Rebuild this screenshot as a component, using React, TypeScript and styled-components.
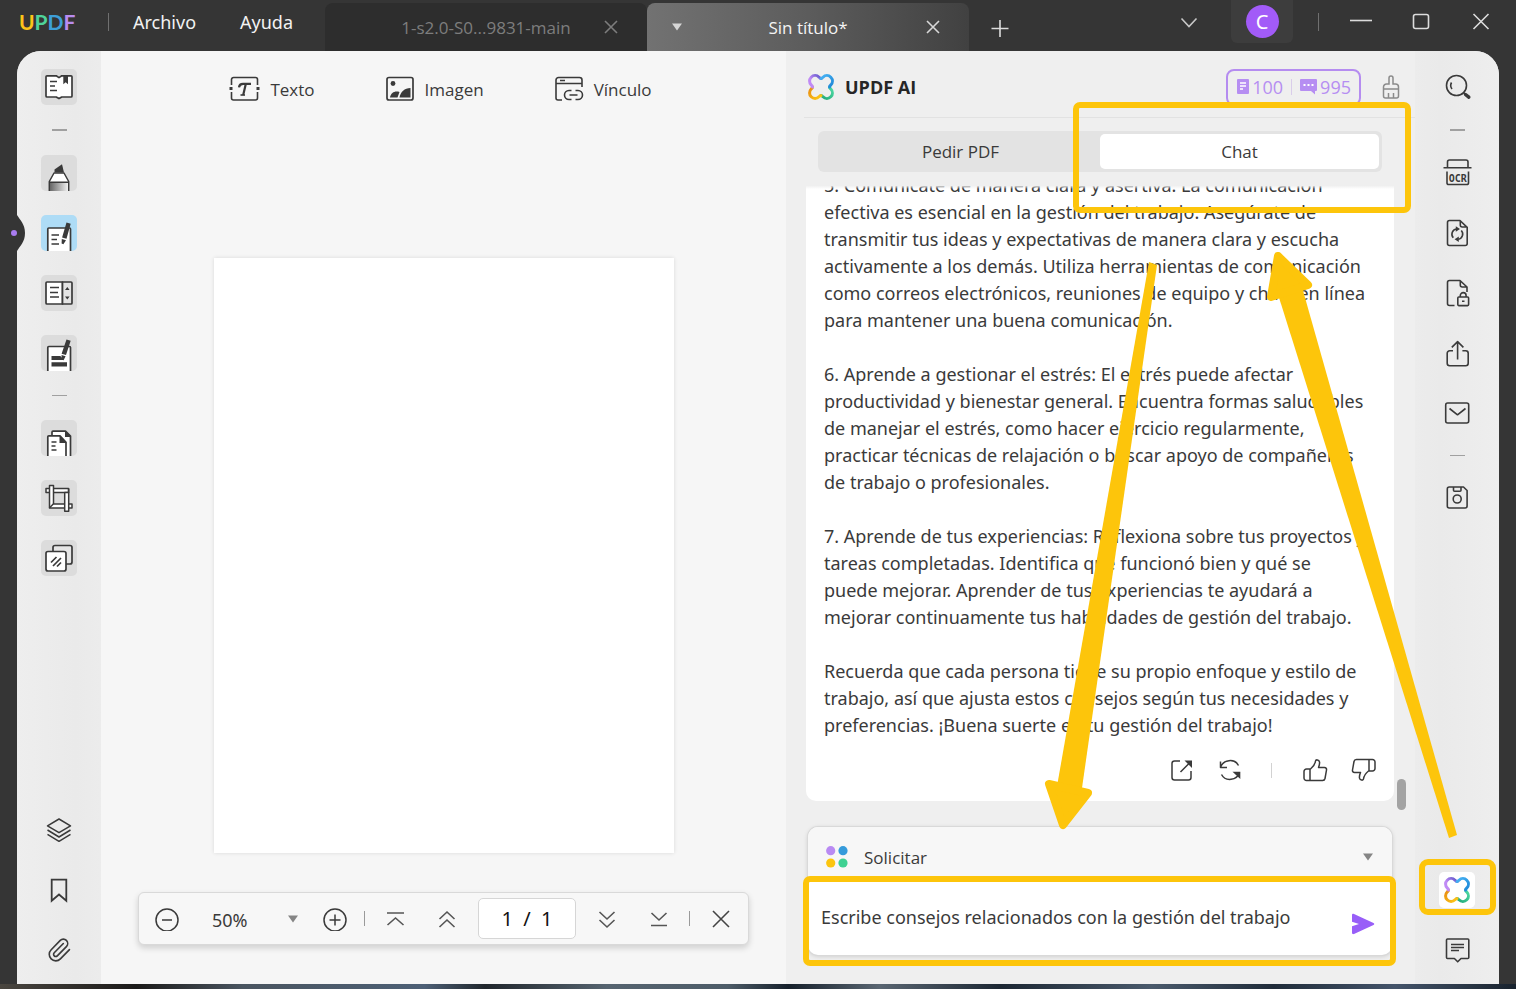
import React from "react";
import styled, { createGlobalStyle } from "styled-components";
import { Paperclip } from "lucide-react";

const INK = "#3a3a3a";
const FONT = '"Noto Sans", "Open Sans", sans-serif';
const FONT_UI = '"Open Sans", "Noto Sans", sans-serif';

const GlobalStyle = createGlobalStyle`
  * { box-sizing: border-box; }
  body { margin: 0; background: #353535; font-family: ${FONT}; font-size: 18px; color: ${INK}; }
  button, input, select, textarea { font: inherit; color: inherit; margin: 0; }
`;

/* ---------- frame ---------- */
const Page = styled.div`
  position: relative;
  display: flex;
  flex-direction: column;
  height: 100vh;
  min-height: 900px;
  overflow: hidden;
`;
const TitleBar = styled.header`
  display: flex;
  align-items: flex-end;
  height: 51px;
  flex: none;
  padding-right: 5px;
  background: #353535;
  color: #f2f2f2;
`;
const Body = styled.main`
  position: relative;
  display: flex;
  flex: 1;
  min-height: 0;
  margin: 0 17px;
  background: #f6f6f6;
  border-radius: 24px 24px 0 0;
`;
const DesktopEdge = styled.div`
  flex: none;
  height: 5px;
  background: linear-gradient(90deg, #4a4640 0%, #1b1a19 9%, #4a5560 16%, #4d6076 28%, #20262c 32%, #566470 40%, #4d5c68 48%, #16202b 52%, #5a6672 58%, #1c2733 66%, #4a5a6c 76%, #202c3a 84%, #44546a 92%, #18222d 100%);
`;

/* ---------- title bar ---------- */
const BarGroup = styled.div`
  display: flex;
  align-items: center;
  height: 100%;
  padding-bottom: 7px;
`;
const Logo = styled.span`
  width: 58px;
  margin-left: 19px;
  font: 700 21px/24px Lato, sans-serif;
`;
const Letter = styled.span<{ $c: string }>`
  color: ${(p) => p.$c};
`;
const BarRule = styled.span<{ $l: number; $r: number }>`
  width: 1px;
  height: 18px;
  margin: 0 ${(p) => p.$r}px 0 ${(p) => p.$l}px;
  background: #707070;
`;
const MenuButton = styled.button`
  padding: 0;
  margin-right: 44px;
  border: 0;
  background: none;
`;
const TabStrip = styled.div`
  display: flex;
  flex: 0 1 644px;
  margin-left: -12px;
`;
const Tab = styled.div<{ $active?: boolean }>`
  display: grid;
  grid-template-columns: 24px 1fr 24px;
  align-items: center;
  flex: 1 1 322px;
  height: 48px;
  padding: 0 24px;
  border-radius: 8px 8px 0 0;
  font-family: ${FONT_UI};
  font-size: 17px;
  color: ${(p) => (p.$active ? "#f4f4f4" : "#7d7d7d")};
  background: ${(p) => (p.$active ? "linear-gradient(90deg, #727272, #5c5c5c 50%, #414141)" : "#2d2d2d")};
`;
const TabTitle = styled.span`
  grid-column: 2;
  text-align: center;
  white-space: nowrap;
`;
const GlyphButton = styled.button<{ $w: number; $tall?: boolean }>`
  display: flex;
  align-items: center;
  justify-content: center;
  flex: none;
  width: ${(p) => p.$w}px;
  height: ${(p) => (p.$tall ? 42 : 36)}px;
  padding: 0;
  border: 0;
  background: none;
`;
const Spacer = styled.div`
  flex: 1;
`;
const Account = styled.button`
  display: flex;
  align-items: center;
  justify-content: center;
  align-self: flex-start;
  width: 62px;
  height: 43px;
  margin-left: 12px;
  padding: 0;
  border: 0;
  border-radius: 0 0 6px 6px;
  background: #3d3d3d;
`;
const Avatar = styled.span`
  width: 33px;
  height: 33px;
  border-radius: 50%;
  background: #a25bf8;
  color: #fff;
  font-size: 20px;
  line-height: 33px;
`;

/* ---------- side rails ---------- */
const Rail = styled.nav<{ $side: "left" | "right" }>`
  position: relative;
  display: flex;
  flex-direction: column;
  align-items: center;
  gap: 24px;
  flex: none;
  width: 84px;
  padding: 18px 0 16px;
  border-radius: ${(p) => (p.$side === "left" ? "24px 0 0 0" : "0 24px 0 0")};
  background: linear-gradient(${(p) => (p.$side === "left" ? "90deg" : "270deg")}, #eeeeee, #eaeaea 70%, #ececec);
`;
const RailButton = styled.button<{ $bg?: string }>`
  width: 36px;
  height: 36px;
  flex: none;
  padding: 0;
  border: 0;
  border-radius: 5px;
  background: ${(p) => p.$bg || "transparent"};
  overflow: hidden;
  svg { display: block; }
`;
const RailRule = styled.span<{ $thin?: boolean }>`
  width: 15px;
  height: ${(p) => (p.$thin ? 1 : 2)}px;
  flex: none;
  background: #a0a0a0;
`;
const RailGrip = styled.span`
  position: absolute;
  left: -8px;
  top: 162px;
  width: 16px;
  height: 40px;
`;

/* ---------- canvas ---------- */
const Canvas = styled.section`
  display: flex;
  flex-direction: column;
  align-items: center;
  flex: 1;
  min-width: 0;
  padding-bottom: 39px;
`;
const EditBar = styled.div`
  display: flex;
  align-items: center;
  justify-content: center;
  gap: 70px;
  height: 76px;
  padding-right: 6px;
`;
const EditButton = styled.button`
  display: flex;
  align-items: center;
  gap: 10px;
  padding: 0;
  border: 0;
  background: none;
  font-family: ${FONT_UI};
  font-size: 17px;
`;
const Sheet = styled.div`
  width: 460px;
  height: 595px;
  margin-bottom: 39px;
  flex: none;
  background: #fff;
  box-shadow: 0 0 4px rgba(0, 0, 0, 0.12);
`;
const ZoomBar = styled.div`
  display: flex;
  align-items: center;
  height: 53px;
  flex: none;
  padding-left: 13px;
  border: 1px solid #d9d9d9;
  border-radius: 6px;
  background: #f7f7f7;
  box-shadow: 0 3px 6px rgba(0, 0, 0, 0.16);
`;
const SelectWrap = styled.label<{ $zoom?: boolean }>`
  position: relative;
  display: flex;
  align-items: center;
  ${(p) => (p.$zoom ? "width: 88px; margin: 0 20px 0 30px;" : `flex: 1; margin-left: 16px; font-family: ${FONT_UI}; font-size: 17px;`)}
  svg { position: absolute; right: 1px; pointer-events: none; }
`;
const Select = styled.select`
  appearance: none;
  width: 100%;
  padding: 2px 0 0;
  border: 0;
  background: none;
  outline: 0;
`;
const ZoomRule = styled.span<{ $l: number }>`
  width: 1px;
  height: 15px;
  margin: 0 4px 0 ${(p) => p.$l}px;
  background: #9a9a9a;
`;
const PageInput = styled.input`
  width: 98px;
  height: 41px;
  margin: 0 5px;
  padding: 0;
  border: 1px solid #d6d6d6;
  border-radius: 5px;
  background: #fff;
  color: #111;
  font-size: 20px;
  text-align: center;
`;

/* ---------- assistant ---------- */
const Panel = styled.section`
  display: flex;
  flex-direction: column;
  flex: none;
  width: 629px;
  padding-bottom: 29px;
  background: #efefef;
`;
const PanelHead = styled.div`
  display: flex;
  align-items: center;
  height: 67px;
  margin-left: 18px;
  padding: 6px 12px 0 4px;
  border-bottom: 1px solid #e2e2e2;
  flex: none;
`;
const PanelTitle = styled.h1`
  flex: 1;
  margin: 0 0 0 11px;
  font-family: ${FONT_UI};
  font-size: 18px;
  line-height: 24px;
  font-weight: 700;
  color: #262626;
`;
const Credits = styled.div`
  display: flex;
  align-items: center;
  gap: 3px;
  height: 37px;
  margin-right: 18px;
  padding: 0 8px 0 9px;
  border: 2px solid #b58cf0;
  border-radius: 8px;
  font-family: ${FONT_UI};
  color: #b68ef2;
`;
const CreditRule = styled.span`
  width: 1px;
  height: 16px;
  margin: 0 5px;
  background: #d9cdea;
`;
const Segments = styled.div`
  display: grid;
  grid-template-columns: 1fr 1fr;
  flex: none;
  height: 41px;
  margin: 13px 33px 10px 32px;
  padding: 3px;
  border-radius: 6px;
  background: #e3e3e3;
`;
const Segment = styled.button<{ $on?: boolean }>`
  padding: 0;
  border: 0;
  border-radius: 5px;
  font-family: ${FONT_UI};
  font-size: 17px;
  background: ${(p) => (p.$on ? "#fff" : "transparent")};
`;
const Feed = styled.div`
  position: relative;
  display: flex;
  flex: 1;
  min-height: 0;
  margin: 0 8px 14px 20px;
  overflow: hidden;
  &::before {
    content: "";
    position: absolute;
    inset: 0 0 auto 0;
    height: 7px;
    background: linear-gradient(#efefef 50%, rgba(239, 239, 239, 0));
  }
`;
const Messages = styled.div`
  display: flex;
  flex-direction: column;
  justify-content: flex-end;
  flex: 1;
  padding-bottom: 12px;
`;
const Card = styled.article`
  padding: 18px 0 14px 18px;
  border-radius: 10px;
  background: #fff;
`;
const Answer = styled.p`
  margin: 0 0 27px;
  line-height: 27px;
  white-space: pre;
  &:last-of-type { margin-bottom: 14px; }
`;
const Actions = styled.div`
  display: flex;
  align-items: center;
  justify-content: flex-end;
  padding-right: 6px;
  height: 34px;
`;
const ActionRule = styled.span`
  width: 1px;
  height: 15px;
  margin: 0 18px 0 17px;
  background: #d2d2d2;
`;
const ScrollThumb = styled.span`
  align-self: flex-end;
  width: 9px;
  height: 31px;
  margin: 0 1px 3px 3px;
  border-radius: 5px;
  background: #a3a3a3;
`;
const Composer = styled.form`
  display: flex;
  flex-direction: column;
  flex: none;
  height: 128px;
  margin: 0 23px 0 22px;
  border-radius: 10px;
  background: #fff;
  box-shadow: 0 0 0 1px #d9d9d9, 0 1px 5px rgba(0, 0, 0, 0.18);
  overflow: hidden;
`;
const PromptRow = styled.div`
  display: flex;
  align-items: center;
  height: 51px;
  padding: 8px 17px 0 18px;
  background: #f7f7f7;
`;
const PromptInputRow = styled.div`
  display: flex;
  align-items: center;
  flex: 1;
  padding: 0 11px 0 13px;
`;
const PromptInput = styled.input`
  flex: 1;
  min-width: 0;
  padding: 0;
  border: 0;
  outline: 0;
  background: none;
`;
const SendSlot = styled.div`
  padding-top: 14px;
`;

const Callouts = styled.svg`
  position: absolute;
  top: 0;
  right: 0;
  pointer-events: none;
`;

/* ---------- drawings ---------- */
const Box = ({ children, size = 36, w = 1.5 }: { children: React.ReactNode; size?: number; w?: number }) => (
  <svg width={size} height={size} viewBox={`0 0 ${size} ${size}`} fill="none" stroke={INK} strokeWidth={w} strokeLinejoin="round">
    {children}
  </svg>
);

const Caret = ({ color = "#858585" }: { color?: string }) => (
  <svg width="12" height="8" viewBox="0 0 12 8" fill={color}><path d="M1 .5h10L6 7.500z" /></svg>
);

const Line = ({ d, color, w = 1.6, width = 24 }: { d: string; color: string; w?: number; width?: number }) => (
  <svg width={width} height="24" viewBox={`0 0 ${width} 24`} fill="none" stroke={color} strokeWidth={w}><path d={d} /></svg>
);

const Clover = ({ size = 26 }: { size?: number }) => (
  <svg width={size} height={size} viewBox="-13 -13 26 26" fill="none" strokeWidth="3" strokeLinecap="round">
    <defs>
      <linearGradient id="lobeA" x1="0" y1="1" x2="1" y2="0"><stop offset="0.4" stopColor="#c08af5" /><stop offset="1" stopColor="#5b55c8" /></linearGradient>
      <linearGradient id="lobeB" x1="0" y1="0" x2="1" y2="1"><stop offset="0" stopColor="#49b4f5" /><stop offset="1" stopColor="#1c86d6" /></linearGradient>
      <linearGradient id="lobeC" x1="1" y1="0" x2="0" y2="1"><stop offset="0" stopColor="#4fdca6" /><stop offset="1" stopColor="#22a877" /></linearGradient>
      <linearGradient id="lobeD" x1="1" y1="1" x2="0" y2="0"><stop offset="0" stopColor="#fdca17" /><stop offset="1" stopColor="#e88a12" /></linearGradient>
    </defs>
    <path stroke="url(#lobeC)" d="M8.500 0Q8.500 1 9.800 2A5 5 0 1 1 2 9.800Q1 8.500 0 8.500" />
    <path stroke="url(#lobeD)" d="M0 8.500Q-1 8.500-2 9.800A5 5 0 1 1-9.800 2Q-8.500 1-8.500 0" />
    <path stroke="url(#lobeA)" d="M-8.500 0Q-8.500-1-9.800-2A5 5 0 1 1-2-9.800Q-1-8.500 0-8.500" />
    <path stroke="url(#lobeB)" d="M0-8.500Q1-8.500 2-9.800A5 5 0 1 1 9.800-2Q8.500-1 8.500 0" />
  </svg>
);

const ReaderIcon = () => (
  <Box w={1.7}>
    <path fill="#fff" d="M6 6.800h9.200l2.800 1.800 2.800-1.800H30a1 1 0 0 1 1 1V27a1 1 0 0 1-1 1h-9.200L18 29.600 15.200 28H6a1 1 0 0 1-1-1V7.800a1 1 0 0 1 1-1z" />
    <path d="M9 12.500h7M9 17h5M9 21.500h7" />
    <path fill={INK} stroke="none" d="M22.300 6.800H27v8.400l-2.300-2-2.400 2z" />
  </Box>
);
const MarkerIcon = () => (
  <Box>
    <defs><linearGradient id="ink"><stop offset="0" stopColor="#666" /><stop offset="1" stopColor="#f0f0f0" /></linearGradient></defs>
    <path fill="#fff" d="M13 18 8.300 26.500V37h19.400V26.500L23 18z" />
    <path fill="url(#ink)" stroke="none" d="M9 28h18v9H9z" />
    <path d="M8.300 27.300h19.400" />
    <path fill={INK} stroke="none" d="M13.500 17.500v-3L21 9.300l2 8.200z" />
  </Box>
);
const EditIcon = () => (
  <Box w={1.7}>
    <path fill="#fff" d="M6.800 37V14a1 1 0 0 1 1-1h20.700a1 1 0 0 1 1 1v23" />
    <path d="M10.500 20H18M10.500 24.500H16M10.500 29H18" />
    <path fill={INK} stroke="none" d="m25.500 7.500 4.200 1.200-4.200 15-4.400-1.200zM20.800 24l4.200 1.200-2.600 4-1.800-.6z" />
  </Box>
);
const FormIcon = () => (
  <Box w={1.7}>
    <path fill="#fff" d="M6 7h15.500v22H6a1 1 0 0 1-1-1V8a1 1 0 0 1 1-1z" />
    <path fill="#e3e3e3" d="M21.500 7H30a1 1 0 0 1 1 1v20a1 1 0 0 1-1 1h-8.500z" />
    <path d="M9 12.500h9M9 17.500h8M9 22h9" />
    <path fill={INK} stroke="none" d="m26.300 12 2.300 3H24zM26.300 24.500l2.300-3H24z" />
  </Box>
);
const RedactIcon = () => (
  <Box w={1.7}>
    <path fill="#fff" d="M6.800 37V12.500a1 1 0 0 1 1-1h20.700a1 1 0 0 1 1 1V37" />
    <path fill={INK} stroke="none" d="M10.500 21h9l2.200 4H10.500zM10.500 27.300H26v4.200H10.500zM25.500 4.500l4.200 1.200-4.700 14.300-4.400-1.200zM20.600 20l4 1.200-2 4-2.200-.8z" />
  </Box>
);
const PagesIcon = () => (
  <Box w={1.7}>
    <path fill="#fff" d="M11 16v-3.800a1 1 0 0 1 1-1h12.500l5 5V37H20" />
    <path fill={INK} stroke="none" d="M24 11v6h6z" />
    <path fill="#fff" d="M6.800 37V16.800a1 1 0 0 1 1-1H19l6 6.500V37" />
    <path fill={INK} stroke="none" d="M18.500 15.500V23h7z" />
    <path d="M10.500 22h5M10.500 26h4M10.500 30h5" />
  </Box>
);
const CropIcon = () => (
  <Box w={1.5}>
    <path fill="#fff" d="M5 8.500h22.500v4H5z" />
    <path fill="#fff" d="M8.500 5.500h4V24H31v4H8.500z" />
    <path fill="#fff" d="M23.700 12.500h4v18.700h-4z" />
    <path d="M12.300 24l-4 4M27.700 8.500v4" />
  </Box>
);
const StampIcon = () => (
  <Box w={1.7}>
    <rect x="12" y="5.500" width="19" height="18.500" rx="2" fill="#e6e6e6" />
    <rect x="5" y="11.500" width="20" height="19.500" rx="2" fill="#fff" />
    <path d="m10 22.500 5.500-5.500M12 26l8-8M16 26.500l4-4" />
  </Box>
);
const LayersIcon = () => (
  <Box>
    <path d="m18 7 11.500 6.800L18 20.700 6.500 13.800zM6.500 18 18 25l11.500-7M6.500 22.300 18 29.300l11.500-7" />
  </Box>
);
const BookmarkIcon = () => (
  <Box w={1.8}><path strokeLinejoin="miter" d="M10.700 7.700h14.600v21L18 22.500l-7.300 6.200z" /></Box>
);
const SearchIcon = () => (
  <Box w={1.6}>
    <circle cx="17.500" cy="16.500" r="10" />
    <path d="M12.500 13.500a6 6 0 0 0 .5 6.500" />
    <path strokeWidth="3.500" strokeLinecap="round" d="m26.500 25.500 3.300 2.700" />
    <path d="m24.500 23.500 2 2" />
  </Box>
);
const OcrIcon = () => (
  <Box w={1.6}>
    <path d="M8.500 12.500V7a2 2 0 0 1 2-2H27a2 2 0 0 1 2 2v5.500M4.500 12.800h28M8 16.500V28a1.500 1.500 0 0 0 1.500 1.500H28a1.500 1.500 0 0 0 1.500-1.500V16.500" />
    <text x="18.800" y="26.500" textAnchor="middle" fontFamily="DejaVu Sans Mono, monospace" fontSize="10" fontWeight="700" fill={INK} stroke="none">OCR</text>
  </Box>
);
const ConvertIcon = () => (
  <Box w={1.6}>
    <path d="M10.500 5.500H21l7.200 6.800V28.500a2 2 0 0 1-2 2H10.500a2 2 0 0 1-2-2v-21a2 2 0 0 1 2-2zM21.300 5.800V10a2 2 0 0 0 2 2h4.700" />
    <path d="M14.300 22.800a5.300 5.300 0 0 1 3-8.800M22.300 15.500a5.300 5.300 0 0 1-3 8.800" />
    <path fill={INK} stroke="none" d="m16.800 11.300 4.200 2.700-4.200 2.800zM19.800 21.500l-4.200 2.800 4.200 2.700z" />
  </Box>
);
const ProtectIcon = () => (
  <Box w={1.6}>
    <path d="M15.500 30.500h-5a2 2 0 0 1-2-2v-21a2 2 0 0 1 2-2H21l7 6.500v5M21.300 5.800V10a2 2 0 0 0 2 2h4.700" />
    <rect x="18.800" y="22" width="10.800" height="8.600" rx="1" />
    <path d="M21.300 22v-1.500a2.900 2.900 0 0 1 5.800 0V22M23 26.300h2.500" />
  </Box>
);
const ShareIcon = () => (
  <Box w={1.6}>
    <path d="M14 15.800h-3.300a2.500 2.500 0 0 0-2.500 2.500v10a2.500 2.500 0 0 0 2.500 2.500h16a2.500 2.500 0 0 0 2.500-2.500v-10a2.500 2.500 0 0 0-2.500-2.500h-3.300M18.600 24.500V7M12.800 12.300l5.800-5.600 5.800 5.600" />
  </Box>
);
const MailIcon = () => (
  <Box w={1.6}>
    <rect x="6.700" y="8" width="23" height="20" rx="2" />
    <path d="m10.500 13.500 8 6.300 8-6.300" />
  </Box>
);
const SaveIcon = () => (
  <Box w={1.6}>
    <path d="M10.300 7h14.200l3.600 3.500V26a2 2 0 0 1-2 2H10.300a2 2 0 0 1-2-2V9a2 2 0 0 1 2-2z" />
    <path d="M14.500 7v3.200a1 1 0 0 0 1 1H21a1 1 0 0 0 1-1V7" />
    <circle cx="18.200" cy="19" r="4" />
  </Box>
);
const CommentIcon = () => (
  <Box w={1.6}>
    <path d="M8.500 7h20.300a1 1 0 0 1 1 1v17.500a1 1 0 0 1-1 1H22l-3.300 3.300-3.300-3.300H8.500a1 1 0 0 1-1-1V8a1 1 0 0 1 1-1z" />
    <path strokeWidth="1.300" d="M12 12.500h13M12 15.500h13M12 18.500h8" />
  </Box>
);

const TextIcon = () => (
  <svg width="31" height="28" viewBox="0 0 31 28" fill="none" stroke={INK} strokeWidth="1.600">
    <path d="M2.500 10V4.500a2 2 0 0 1 2-2h22a2 2 0 0 1 2 2V10M2.500 17v6a2 2 0 0 0 2 2h22a2 2 0 0 0 2-2v-6" />
    <path strokeWidth="3" d="M.5 13.500h3M27.500 13.500h3" />
    <path strokeWidth="2.200" d="M10 12.300c.3-2.700 1.800-3.500 4-3.500h8M16.800 9l-2.600 11" />
    <path d="M11.500 20h4.500" />
  </svg>
);
const ImageIcon = () => (
  <svg width="30" height="28" viewBox="0 0 30 28" fill="none" stroke={INK} strokeWidth="1.700">
    <rect x="2" y="2.500" width="26" height="22.500" rx="2" />
    <circle cx="8" cy="8.500" r="2.400" fill={INK} stroke="none" />
    <path fill={INK} stroke="none" d="M5 22.500c1-5 5-7 9.500-5.500l-2 5.500zM14.500 22.500c1-5.500 5-9.500 11-9.500v9.500z" />
  </svg>
);
const LinkIcon = () => (
  <svg width="30" height="28" viewBox="0 0 30 28" fill="none" stroke={INK} strokeWidth="1.600">
    <path d="M8 25H4a2 2 0 0 1-2-2V5a2.500 2.500 0 0 1 2.500-2.500h21A2.500 2.500 0 0 1 28 5v7M2 8.500h26M6 5.500h5" />
    <path d="M17.500 15.500H15a4.500 4.500 0 0 0 0 9h2.500M21.500 15.500H24a4.500 4.500 0 0 1 0 9h-2.500M15.500 20h8" />
  </svg>
);
const BrushIcon = () => (
  <svg width="18" height="26" viewBox="0 0 18 26" fill="none" stroke="#8b8b8b" strokeWidth="1.500">
    <path d="M7 10V4a2 2 0 0 1 4 0v6h2.500a3 3 0 0 1 3 3v9a2 2 0 0 1-2 2h-11a2 2 0 0 1-2-2v-9a3 3 0 0 1 3-3zM1.500 15h15M6.500 24v-5M11.500 24v-5" />
  </svg>
);
const ExportIcon = () => (
  <Box size={26}>
    <path d="M11 4H5.500A2.500 2.500 0 0 0 3 6.500v14A2.500 2.500 0 0 0 5.500 23h14a2.500 2.500 0 0 0 2.500-2.500V14M11.500 15 21 5.500" />
    <path fill={INK} stroke="none" d="M15.500 3.500H23V11z" />
  </Box>
);
const RetryIcon = () => (
  <Box size={26}>
    <path d="M3.500 10.500C6 2.500 17.500 1 21.500 8.500M3.500 4.500v6H10M22.500 15.500C20 23.500 8.500 25 4.500 17.500" />
    <path fill={INK} stroke="none" d="M15.500 14.800h7.800V22z" />
  </Box>
);
const ThumbPath = () => (
  <path d="M8.500 12c2.500-2 4.500-4 5-8 .2-1.600 3.500-1.600 4 .8.300 1.500-.2 3.700-1 5.700h6c1.500 0 2.200 1.200 2 2.500l-1.500 8.500a2.500 2.500 0 0 1-2.500 2H4.500A2.500 2.500 0 0 1 2 21v-6.500A2.500 2.500 0 0 1 4.500 12zM8 12v11.500" />
);
const SendIcon = () => (
  <svg width="24" height="22" viewBox="0 0 24 22" fill="#985ef8"><path d="M1 2.200C1 .9 2 .6 3 1l19.500 9c1 .5 1 1.500 0 2L3 21c-1 .4-2 .1-2-1.200v-6.500L8 11 1 8.700z" /></svg>
);
const DotsIcon = () => (
  <svg width="22" height="22" viewBox="0 0 22 22">
    <circle cx="4.700" cy="4.700" r="4.600" fill="#b98af3" /><circle cx="17" cy="4.700" r="4.600" fill="#359bdb" />
    <circle cx="4.700" cy="17" r="4.600" fill="#fcc50e" /><circle cx="17" cy="17" r="4.600" fill="#3fd192" />
  </svg>
);

const ANSWERS = [
  `5. Comunícate de manera clara y asertiva: La comunicación
efectiva es esencial en la gestión del trabajo. Asegúrate de
transmitir tus ideas y expectativas de manera clara y escucha
activamente a los demás. Utiliza herramientas de comunicación
como correos electrónicos, reuniones de equipo y chats en línea
para mantener una buena comunicación.`,
  `6. Aprende a gestionar el estrés: El estrés puede afectar
productividad y bienestar general. Encuentra formas saludables
de manejar el estrés, como hacer ejercicio regularmente,
practicar técnicas de relajación o buscar apoyo de compañeros
de trabajo o profesionales.`,
  `7. Aprende de tus experiencias: Reflexiona sobre tus proyectos y
tareas completadas. Identifica qué funcionó bien y qué se
puede mejorar. Aprender de tus experiencias te ayudará a
mejorar continuamente tus habilidades de gestión del trabajo.`,
  `Recuerda que cada persona tiene su propio enfoque y estilo de
trabajo, así que ajusta estos consejos según tus necesidades y
preferencias. ¡Buena suerte en tu gestión del trabajo!`,
];

const TILE = "#dcdcdc";

export default function App() {
  return (
    <Page>
      <GlobalStyle />
      <TitleBar>
        <BarGroup>
          <Logo>
            <Letter $c="#fcc419">U</Letter><Letter $c="#4fd39a">P</Letter><Letter $c="#3d9fd8">D</Letter><Letter $c="#b98cf0">F</Letter>
          </Logo>
          <BarRule $l={31} $r={24} />
          <MenuButton>Archivo</MenuButton>
          <MenuButton>Ayuda</MenuButton>
        </BarGroup>
        <TabStrip>
          <Tab>
            <TabTitle>1-s2.0-S0...9831-main</TabTitle>
            <GlyphButton $w={24} aria-label="Cerrar"><Line d="m6 6 12 12M18 6 6 18" color="#7d7d7d" /></GlyphButton>
          </Tab>
          <Tab $active>
            <Caret color="#d6d6d6" />
            <TabTitle>Sin título*</TabTitle>
            <GlyphButton $w={24} aria-label="Cerrar"><Line d="m6 6 12 12M18 6 6 18" color="#d8d8d8" /></GlyphButton>
          </Tab>
        </TabStrip>
        <GlyphButton $w={62} $tall aria-label="Nueva pestaña"><Line d="M12 2v17M3.500 10.500h17" color="#dcdcdc" /></GlyphButton>
        <Spacer />
        <BarGroup>
          <GlyphButton $w={60} aria-label="Lista"><Line d="m4.500 8.500 7.500 8 7.500-8" color="#c8c8c8" /></GlyphButton>
          <Account aria-label="Cuenta"><Avatar>C</Avatar></Account>
          <BarRule $l={25} $r={12} />
          <GlyphButton $w={60} aria-label="Minimizar"><Line d="M1 10.500h22" color="#dcdcdc" /></GlyphButton>
          <GlyphButton $w={60} aria-label="Maximizar"><Line d="M6.500 4.500h11a2 2 0 0 1 2 2v10a2 2 0 0 1-2 2h-11a2 2 0 0 1-2-2v-10a2 2 0 0 1 2-2z" color="#dcdcdc" /></GlyphButton>
          <GlyphButton $w={60} aria-label="Cerrar ventana"><Line d="m4.500 4 15 15M19.500 4l-15 15" color="#dcdcdc" /></GlyphButton>
        </BarGroup>
      </TitleBar>

      <Body>
        <Rail $side="left">
          <RailGrip>
            <svg width="16" height="40" viewBox="0 0 16 40">
              <path fill="#353535" d="M8 2c3 5 8 9 8 18s-5 13-8 18z" />
              <circle cx="5" cy="20" r="3" fill="#a97cf0" />
            </svg>
          </RailGrip>
          <RailButton $bg={TILE} aria-label="Lector"><ReaderIcon /></RailButton>
          <RailRule />
          <RailButton $bg={TILE} aria-label="Comentar"><MarkerIcon /></RailButton>
          <RailButton $bg="#aedcf6" aria-label="Editar"><EditIcon /></RailButton>
          <RailButton $bg={TILE} aria-label="Formulario"><FormIcon /></RailButton>
          <RailButton $bg={TILE} aria-label="Redactar"><RedactIcon /></RailButton>
          <RailRule $thin />
          <RailButton $bg={TILE} aria-label="Páginas"><PagesIcon /></RailButton>
          <RailButton $bg={TILE} aria-label="Recortar"><CropIcon /></RailButton>
          <RailButton $bg={TILE} aria-label="Marca de agua"><StampIcon /></RailButton>
          <Spacer />
          <RailButton aria-label="Capas"><LayersIcon /></RailButton>
          <RailButton aria-label="Marcador"><BookmarkIcon /></RailButton>
          <RailButton aria-label="Adjuntos"><Box><Paperclip x="5" y="5" width={26} height={26} strokeWidth={1.5} /></Box></RailButton>
        </Rail>

        <Canvas>
          <EditBar>
            <EditButton><TextIcon />Texto</EditButton>
            <EditButton><ImageIcon />Imagen</EditButton>
            <EditButton><LinkIcon />Vínculo</EditButton>
          </EditBar>
          <Spacer />
          <Sheet />
          <ZoomBar>
            <GlyphButton $w={30} aria-label="Alejar"><Line d="M12 2a11 11 0 1 0 0 22 11 11 0 0 0 0-22zM7 13h10" color={INK} w={1.5} /></GlyphButton>
            <SelectWrap $zoom>
              <Select aria-label="Zoom"><option>50%</option></Select>
              <Caret />
            </SelectWrap>
            <GlyphButton $w={30} aria-label="Acercar"><Line d="M12 2a11 11 0 1 0 0 22 11 11 0 0 0 0-22zM6.500 13h11M12 7.500v11" color={INK} w={1.5} /></GlyphButton>
            <ZoomRule $l={14} />
            <GlyphButton $w={52} aria-label="Primera página"><Line d="M4 6h17M4.500 18l8-7 8 7" color="#555" /></GlyphButton>
            <GlyphButton $w={52} aria-label="Página anterior"><Line d="m4.500 12 7.500-7 7.500 7M4.500 20l7.500-7 7.500 7" color="#555" /></GlyphButton>
            <PageInput aria-label="Página" defaultValue="1  /  1" />
            <GlyphButton $w={52} aria-label="Página siguiente"><Line d="m4.500 5 7.500 7 7.500-7M4.500 13l7.500 7 7.500-7" color="#555" /></GlyphButton>
            <GlyphButton $w={52} aria-label="Última página"><Line d="m4.500 6 7.500 7 7.500-7M4 18.500h16" color="#555" /></GlyphButton>
            <ZoomRule $l={4} />
            <GlyphButton $w={54} aria-label="Cerrar barra"><Line d="m4 4 16 16M20 4 4 20" color="#444" /></GlyphButton>
          </ZoomBar>
        </Canvas>

        <Panel>
          <PanelHead>
            <Clover />
            <PanelTitle>UPDF AI</PanelTitle>
            <Credits>
              <svg width="12" height="16" viewBox="0 0 12 16" fill="#b68ef2"><rect width="12" height="15" rx="1" /><path stroke="#fff" strokeWidth="1.400" d="M3 4h6M3 7h6M3 10h3" /></svg>
              100
              <CreditRule />
              <svg width="17" height="16" viewBox="0 0 17 16" fill="#b68ef2"><path d="M1 0h15a1 1 0 0 1 1 1v10a1 1 0 0 1-1 1h-1v3.500L11 12H1a1 1 0 0 1-1-1V1a1 1 0 0 1 1-1z" /><path stroke="#fff" strokeWidth="2" d="M3.500 6h2M7.500 6h2M11.500 6h2" /></svg>
              995
            </Credits>
            <GlyphButton $w={24} aria-label="Limpiar"><BrushIcon /></GlyphButton>
          </PanelHead>
          <Segments>
            <Segment>Pedir PDF</Segment>
            <Segment $on>Chat</Segment>
          </Segments>
          <Feed>
            <Messages>
              <Card>
                {ANSWERS.map((t) => <Answer key={t}>{t}</Answer>)}
                <Actions>
                  <GlyphButton $w={48} aria-label="Exportar"><ExportIcon /></GlyphButton>
                  <GlyphButton $w={48} aria-label="Regenerar"><RetryIcon /></GlyphButton>
                  <ActionRule />
                  <GlyphButton $w={49} aria-label="Me gusta"><Box size={26}><ThumbPath /></Box></GlyphButton>
                  <GlyphButton $w={49} aria-label="No me gusta"><Box size={26}><g transform="rotate(180 13 13)"><ThumbPath /></g></Box></GlyphButton>
                </Actions>
              </Card>
            </Messages>
            <ScrollThumb />
          </Feed>
          <Composer>
            <PromptRow>
              <DotsIcon />
              <SelectWrap>
                <Select aria-label="Tipo de mensaje"><option>Solicitar</option></Select>
                <Caret />
              </SelectWrap>
            </PromptRow>
            <PromptInputRow>
              <PromptInput aria-label="Mensaje" defaultValue="Escribe consejos relacionados con la gestión del trabajo" />
              <SendSlot><GlyphButton type="button" $w={36} aria-label="Enviar"><SendIcon /></GlyphButton></SendSlot>
            </PromptInputRow>
          </Composer>
        </Panel>

        <Rail $side="right">
          <RailButton aria-label="Buscar"><SearchIcon /></RailButton>
          <RailRule />
          <RailButton aria-label="Reconocer texto"><OcrIcon /></RailButton>
          <RailButton aria-label="Convertir"><ConvertIcon /></RailButton>
          <RailButton aria-label="Proteger"><ProtectIcon /></RailButton>
          <RailButton aria-label="Compartir"><ShareIcon /></RailButton>
          <RailButton aria-label="Correo"><MailIcon /></RailButton>
          <RailRule $thin />
          <RailButton aria-label="Guardar"><SaveIcon /></RailButton>
          <Spacer />
          <RailButton $bg="#fff" aria-label="UPDF AI"><Box><svg x="5" y="5" width="26" height="26"><Clover /></svg></Box></RailButton>
          <RailButton aria-label="Comentarios"><CommentIcon /></RailButton>
        </Rail>
      </Body>
      <DesktopEdge />

      <Callouts width="716" height="989" viewBox="800 0 716 989" fill="none" stroke="#fdc50b" strokeWidth="6" aria-hidden="true">
        <rect x="1076" y="105" width="332" height="105" rx="4" />
        <rect x="806" y="879" width="587" height="84" rx="4" />
        <rect x="1422" y="862" width="71" height="50" rx="6" />
        <g fill="#fdc50b" stroke="none">
          <path d="M1149 262 1157 265 1081 795 1056 792z" />
          <path d="M1276 288 1300 280 1457 835 1449 838z" />
        </g>
        <g fill="#fdc50b" strokeLinejoin="round" strokeWidth="8">
          <path d="M1049 784 1088 793 1063 825z" />
          <path d="M1278 256 1308 285 1271 297z" />
        </g>
      </Callouts>
    </Page>
  );
}
